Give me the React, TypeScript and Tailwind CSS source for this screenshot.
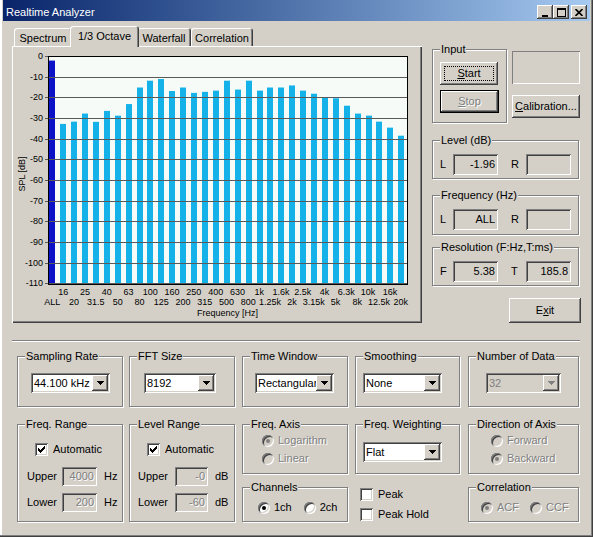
import React from "react";

const FONT = "font-['Liberation_Sans',Arial,sans-serif]";
const RAISED =
  "bg-[#d4d0c8] shadow-[inset_-1px_-1px_0_#404040,inset_1px_1px_0_#ffffff,inset_-2px_-2px_0_#808080,inset_2px_2px_0_#d4d0c8]";
const SUNKEN =
  "shadow-[inset_1px_1px_0_#808080,inset_-1px_-1px_0_#ffffff,inset_2px_2px_0_#404040,inset_-2px_-2px_0_#d4d0c8]";
const DIS = "text-[#808080] [text-shadow:1px_1px_0_#ffffff]";

// 1/3 octave levels in dB (ALL + 16 Hz .. 20 kHz)
const BARS = [
  -1.96, -32.6, -31.5, -27.6, -31.6, -26.3, -28.6, -23, -15, -11.7, -10.9, -16.7, -15, -17.6, -17.1, -16.5,
  -11.7, -16, -11.7, -16.5, -15, -15, -14, -16.5, -18, -19.9, -20.2, -23.8, -27.6, -28.6, -31.5, -34.4, -38.3,
];
const TOP = ["16", "25", "40", "63", "100", "160", "250", "400", "630", "1k", "1.6k", "2.5k", "4k", "6.3k", "10k", "16k"];
const BOT = ["ALL", "20", "31.5", "50", "80", "125", "200", "315", "500", "800", "1.25k", "2k", "3.15k", "5k", "8k", "12.5k", "20k"];

function Group({ title, className = "", children }: { title: string; className?: string; children?: React.ReactNode }) {
  return (
    <div className={`relative border border-[#808080] shadow-[1px_1px_0_#ffffff,inset_1px_1px_0_#ffffff] ${className}`}>
      <span className="absolute -top-[7px] left-[7px] whitespace-nowrap bg-[#d4d0c8] px-[1px] leading-[13px]">{title}</span>
      {children}
    </div>
  );
}

function Button({
  children,
  className = "",
  disabled,
  focused,
  isDefault,
}: {
  children: React.ReactNode;
  className?: string;
  disabled?: boolean;
  focused?: boolean;
  isDefault?: boolean;
}) {
  return (
    <div className={`${isDefault ? "border border-black" : ""} ${className}`}>
      <div className={`relative flex h-full w-full items-center justify-center ${RAISED} ${disabled ? DIS : ""}`}>
        {focused && <span className="absolute inset-[4px] border border-dotted border-black" />}
        <span className="relative">{children}</span>
      </div>
    </div>
  );
}

function Arrow({ disabled }: { disabled?: boolean }) {
  return (
    <svg width="7" height="4" viewBox="0 0 7 4">
      <path d="M0 0h7v1H6v1H5v1H4v1H3V3H2V2H1V1H0z" fill={disabled ? "#808080" : "#000"} />
    </svg>
  );
}

function Combo({ value, className = "", disabled }: { value: string; className?: string; disabled?: boolean }) {
  return (
    <div className={`flex h-[20px] p-[2px] ${SUNKEN} ${disabled ? "bg-[#d4d0c8]" : "bg-white"} ${className}`}>
      <span className={`flex-1 overflow-hidden whitespace-nowrap pl-[1px] leading-[16px] ${disabled ? "text-[#808080]" : ""}`}>
        {value}
      </span>
      <span className={`flex w-[16px] shrink-0 items-center justify-center ${RAISED}`}>
        <Arrow disabled={disabled} />
      </span>
    </div>
  );
}

function Field({ value = "", className = "", disabled }: { value?: string; className?: string; disabled?: boolean }) {
  return (
    <div className={`flex items-center justify-end bg-[#d4d0c8] pr-[3px] ${SUNKEN} ${disabled ? DIS : ""} ${className}`}>
      {value}
    </div>
  );
}

function Check({ checked }: { checked?: boolean }) {
  return (
    <span className={`flex h-[13px] w-[13px] shrink-0 items-center justify-center bg-white ${SUNKEN}`}>
      {checked && (
        <svg width="7" height="7" viewBox="0 0 7 7">
          <path d="M0 2h1v1h1v1h1V3h1V2h1V1h1V0h1v3H6v1H5v1H4v1H3v1H2V6H1V5H0z" fill="#000" />
        </svg>
      )}
    </span>
  );
}

function Radio({ checked, disabled, className = "" }: { checked?: boolean; disabled?: boolean; className?: string }) {
  return (
    <span
      className={`flex h-[12px] w-[12px] shrink-0 items-center justify-center rounded-full ${
        disabled ? "bg-[#d4d0c8]" : "bg-white"
      } shadow-[inset_1px_1px_0_#808080,inset_-1px_-1px_0_#ffffff,inset_2px_2px_0_#404040,inset_-2px_-2px_0_#d4d0c8] ${className}`}
    >
      {checked && <span className={`h-[4px] w-[4px] rounded-full ${disabled ? "bg-[#808080]" : "bg-black"}`} />}
    </span>
  );
}

function RadioRow({ label, checked, disabled, className = "" }: { label: string; checked?: boolean; disabled?: boolean; className?: string }) {
  return (
    <div className={`flex h-[13px] items-center ${className}`}>
      <Radio checked={checked} disabled={disabled} />
      <span className={`ml-[4px] ${disabled ? DIS : ""}`}>{label}</span>
    </div>
  );
}

function TitleButton({ children, className = "" }: { children: React.ReactNode; className?: string }) {
  return <div className={`flex h-[14px] w-[16px] items-center justify-center ${RAISED} ${className}`}>{children}</div>;
}

function ValueRow({ a, av, b, bv }: { a: string; av: string; b: string; bv: string }) {
  return (
    <div className="flex items-center pl-[7px] pt-[13px]">
      <span className="w-[13px]">{a}</span>
      <Field value={av} className="h-[21px] w-[45px]" />
      <span className="ml-[13px] w-[15px]">{b}</span>
      <Field value={bv} className="h-[21px] w-[45px]" />
    </div>
  );
}

function Chart() {
  const grid = (k: number) => Math.round(k * 20.68) + 0.5;
  return (
    <div className="flex flex-col text-[9px] leading-[10px]">
      <div className="flex pt-[10px]">
        <div className="relative h-[229px] w-[32px]">
          <div className="absolute left-[4px] top-[97px] flex h-[41px] w-[11px] items-center justify-center">
            <span className="-rotate-90 whitespace-nowrap">SPL [dB]</span>
          </div>
          {Array.from({ length: 12 }, (_, k) => (
            <span key={k} className="absolute right-[1px] h-[10px]" style={{ top: grid(k) - 5.5 }}>
              {k === 0 ? "0" : `-${k * 10}`}
            </span>
          ))}
        </div>
        <svg width="364" height="229" className="block">
          <rect x="4.5" y="0.5" width="359" height="228" fill="#f7fbf7" />
          {BARS.map((db, i) => {
            const y = 0.5 + -db * 2.068;
            return (
              <rect
                key={i}
                x={Math.round(5.3 + i * 10.906)}
                y={y}
                width="6"
                height={228 - y}
                fill={i === 0 ? "#0c12c8" : "#14b2e8"}
              />
            );
          })}
          {Array.from({ length: 12 }, (_, k) => (
            <line key={k} x1="1" x2="363" y1={grid(k)} y2={grid(k)} stroke="#5a5a5a" strokeWidth="1" />
          ))}
          <rect x="4.5" y="0.5" width="359" height="228" fill="none" stroke="#000" />
        </svg>
      </div>
      <div className="ml-[34.85px] mt-[2px] grid grid-cols-[repeat(33,10.906px)] grid-rows-[10px_10px]">
        {BARS.map((_, i) => (
          <div key={`t${i}`} className="flex h-[10px] justify-center whitespace-nowrap">
            {i % 2 === 1 ? TOP[(i - 1) / 2] : ""}
          </div>
        ))}
        {BARS.map((_, i) => (
          <div key={`b${i}`} className="flex h-[10px] justify-center whitespace-nowrap">
            {i % 2 === 0 ? BOT[i / 2] : ""}
          </div>
        ))}
      </div>
      <div className="ml-[36px] mt-[1px] w-[359px] text-center">Frequency [Hz]</div>
    </div>
  );
}

export default function App() {
  const tab = "flex h-[18px] items-center justify-center rounded-t-[3px] bg-[#d4d0c8] pt-[3px] shadow-[inset_1px_1px_0_#ffffff,inset_-1px_0_0_#404040,inset_-2px_0_0_#808080]";
  return (
    <div
      className={`flex h-[537px] w-[593px] flex-col overflow-hidden bg-[#d4d0c8] px-[3px] pb-[3px] text-[11px] leading-[13px] text-black ${FONT} shadow-[inset_-1px_-1px_0_#404040,inset_-2px_-2px_0_#808080,inset_2px_0_0_#ffffff]`}
    >
      {/* Title bar */}
      <div className="flex h-[21px] shrink-0 items-center bg-linear-to-r from-[#0a246a] to-[#a6caf0] pl-[3px] pr-[3px] pt-[3px]">
        <span className="flex-1 text-white">Realtime Analyzer</span>
        <TitleButton>
          <svg width="8" height="9" viewBox="0 0 8 9">
            <rect x="1" y="7" width="6" height="2" fill="#000" />
          </svg>
        </TitleButton>
        <TitleButton>
          <svg width="9" height="9" viewBox="0 0 9 9">
            <rect x="0" y="0" width="9" height="2" fill="#000" />
            <rect x="0.5" y="0.5" width="8" height="8" fill="none" stroke="#000" />
          </svg>
        </TitleButton>
        <TitleButton className="ml-[2px]">
          <svg width="8" height="7" viewBox="0 0 8 7">
            <path d="M0.5 0 L7.5 7 M7.5 0 L0.5 7" stroke="#000" strokeWidth="1.6" />
          </svg>
        </TitleButton>
      </div>

      {/* Top: tabs + right controls */}
      <div className="mt-[5px] flex h-[297px] shrink-0 pl-[9px]">
        <div className="flex w-[410px] flex-col">
          <div className="flex h-[20px] items-end pl-[2px]">
            <div className={`${tab} w-[58px]`}>Spectrum</div>
            <div className="relative z-10 -mx-[2px] -mb-[1px] flex h-[21px] w-[69px] items-center justify-center rounded-t-[3px] bg-[#d4d0c8] shadow-[inset_1px_1px_0_#ffffff,inset_-1px_0_0_#404040,inset_-2px_0_0_#808080]">
              1/3 Octave
            </div>
            <div className={`${tab} w-[54px]`}>Waterfall</div>
            <div className={`${tab} w-[62px]`}>Correlation</div>
          </div>
          <div className="h-[277px] shadow-[inset_1px_1px_0_#ffffff,inset_-1px_-1px_0_#404040,inset_-2px_-2px_0_#808080]">
            <Chart />
          </div>
        </div>

        <div className="ml-[10px] flex w-[149px] flex-col">
          <div className="mt-[23px] flex items-start">
            <Group title="Input" className="h-[74px] w-[75px] pl-[7px] pt-[12px]">
              <Button focused className="h-[23px] w-[58px]">
                <u>S</u>tart
              </Button>
              <Button disabled isDefault className="mt-[5px] h-[23px] w-[59px]">
                <u>S</u>top
              </Button>
            </Group>
            <div className="ml-[5px] mt-[2px] flex flex-col">
              <div className="h-[33px] w-[68px] shadow-[inset_1px_1px_0_#808080,inset_-1px_-1px_0_#ffffff]" />
              <Button className="mt-[11px] h-[23px] w-[68px]">
                <u>C</u>alibration...
              </Button>
            </div>
          </div>
          <Group title="Level (dB)" className="mt-[17px] h-[40px] w-[147px]">
            <ValueRow a="L" av="-1.96" b="R" bv="" />
          </Group>
          <Group title="Frequency (Hz)" className="mt-[16px] h-[40px] w-[147px]">
            <ValueRow a="L" av="ALL" b="R" bv="" />
          </Group>
          <Group title="Resolution (F:Hz,T:ms)" className="mt-[12px] h-[40px] w-[147px]">
            <ValueRow a="F" av="5.38" b="T" bv="185.8" />
          </Group>
          <Button className="ml-[77px] mt-[12px] h-[25px] w-[72px]">
            E<u>x</u>it
          </Button>
        </div>
      </div>

      {/* Separator */}
      <div className="ml-[9px] mt-[17px] h-[2px] w-[568px] shrink-0 border-b border-t border-b-white border-t-[#808080]" />

      {/* Settings */}
      <div className="ml-[14px] mt-[14px] flex items-start">
        <div className="flex w-[106px] flex-col">
          <Group title="Sampling Rate" className="h-[51px] pl-[13px] pt-[16px]">
            <Combo value="44.100 kHz" className="w-[79px]" />
          </Group>
          <Group title="Freq. Range" className="mt-[17px] h-[98px]">
            <div className="flex items-center pl-[17px] pt-[18px]">
              <Check checked />
              <span className="ml-[5px]">Automatic</span>
            </div>
            <div className="mt-[11px] flex items-center pl-[9px]">
              <span className="w-[35px]">Upper</span>
              <Field value="4000" disabled className="h-[19px] w-[35px]" />
              <span className="ml-[7px]">Hz</span>
            </div>
            <div className="mt-[7px] flex items-center pl-[9px]">
              <span className="w-[35px]">Lower</span>
              <Field value="200" disabled className="h-[19px] w-[35px]" />
              <span className="ml-[7px]">Hz</span>
            </div>
          </Group>
        </div>

        <div className="ml-[6px] flex w-[106px] flex-col">
          <Group title="FFT Size" className="h-[51px] pl-[14px] pt-[16px]">
            <Combo value="8192" className="w-[72px]" />
          </Group>
          <Group title="Level Range" className="mt-[17px] h-[98px]">
            <div className="flex items-center pl-[17px] pt-[18px]">
              <Check checked />
              <span className="ml-[5px]">Automatic</span>
            </div>
            <div className="mt-[11px] flex items-center pl-[8px]">
              <span className="w-[37px]">Upper</span>
              <Field value="-0" disabled className="h-[19px] w-[33px]" />
              <span className="ml-[7px]">dB</span>
            </div>
            <div className="mt-[7px] flex items-center pl-[8px]">
              <span className="w-[37px]">Lower</span>
              <Field value="-60" disabled className="h-[19px] w-[33px]" />
              <span className="ml-[7px]">dB</span>
            </div>
          </Group>
        </div>

        <div className="ml-[7px] flex w-[106px] flex-col">
          <Group title="Time Window" className="h-[51px] pl-[12px] pt-[16px]">
            <Combo value="Rectangular" className="w-[79px]" />
          </Group>
          <Group title="Freq. Axis" className="mt-[17px] h-[50px] pl-[19px] pt-[9px]">
            <RadioRow label="Logarithm" checked disabled />
            <RadioRow label="Linear" disabled className="mt-[5px]" />
          </Group>
          <Group title="Channels" className="mt-[13px] h-[35px] pl-[15px] pt-[13px]">
            <div className="flex h-[13px] items-center">
              <Radio checked />
              <span className="ml-[4px]">1ch</span>
              <Radio className="ml-[12px]" />
              <span className="ml-[4px]">2ch</span>
            </div>
          </Group>
        </div>

        <div className="ml-[7px] flex w-[105px] flex-col">
          <Group title="Smoothing" className="h-[51px] pl-[7px] pt-[16px]">
            <Combo value="None" className="w-[79px]" />
          </Group>
          <Group title="Freq. Weighting" className="mt-[17px] h-[50px] pl-[7px] pt-[17px]">
            <Combo value="Flat" className="w-[79px]" />
          </Group>
          <div className="mt-[14px] flex items-center pl-[5px]">
            <Check />
            <span className="ml-[5px]">Peak</span>
          </div>
          <div className="mt-[7px] flex items-center pl-[5px]">
            <Check />
            <span className="ml-[5px]">Peak Hold</span>
          </div>
        </div>

        <div className="ml-[8px] flex w-[111px] flex-col">
          <Group title="Number of Data" className="h-[51px] pl-[17px] pt-[16px]">
            <Combo value="32" disabled className="w-[75px]" />
          </Group>
          <Group title="Direction of Axis" className="mt-[17px] h-[50px] pl-[22px] pt-[9px]">
            <RadioRow label="Forward" disabled />
            <RadioRow label="Backward" checked disabled className="mt-[5px]" />
          </Group>
          <Group title="Correlation" className="mt-[13px] h-[35px] pl-[12px] pt-[13px]">
            <div className="flex h-[13px] items-center">
              <Radio checked disabled />
              <span className={`ml-[4px] ${DIS}`}>ACF</span>
              <Radio disabled className="ml-[11px]" />
              <span className={`ml-[4px] ${DIS}`}>CCF</span>
            </div>
          </Group>
        </div>
      </div>
    </div>
  );
}
